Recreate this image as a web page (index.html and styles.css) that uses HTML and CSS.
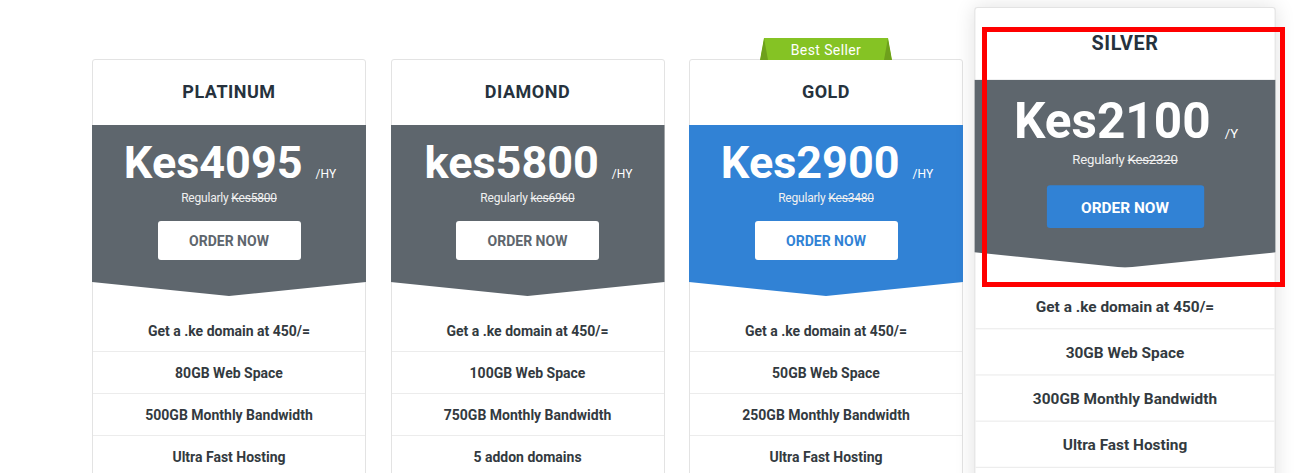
FILE: index.html
```html
<!DOCTYPE html>
<html>
<head>
<meta charset="utf-8">
<link rel="stylesheet" href="styles.css">
</head>
<body>
<div class="plans">
  <div class="card">
    <div class="title">PLATINUM</div>
    <div class="band">
      <div class="price"><span class="amount">Kes4095</span><span class="per">/HY</span></div>
      <div class="regular">Regularly <s>Kes5800</s></div>
      <a class="btn">ORDER NOW</a>
    </div>
    <ul class="features">
      <li>Get a .ke domain at 450/=</li>
      <li>80GB Web Space</li>
      <li>500GB Monthly Bandwidth</li>
      <li>Ultra Fast Hosting</li>
      <li>Free SSL Certificate</li>
    </ul>
  </div>
  <div class="card">
    <div class="title">DIAMOND</div>
    <div class="band">
      <div class="price"><span class="amount">kes5800</span><span class="per">/HY</span></div>
      <div class="regular">Regularly <s>kes6960</s></div>
      <a class="btn">ORDER NOW</a>
    </div>
    <ul class="features">
      <li>Get a .ke domain at 450/=</li>
      <li>100GB Web Space</li>
      <li>750GB Monthly Bandwidth</li>
      <li>5 addon domains</li>
      <li>Ultra Fast Hosting</li>
    </ul>
  </div>
  <div class="card featured">
    <div class="ribbon">Best Seller</div>
    <div class="title">GOLD</div>
    <div class="band">
      <div class="price"><span class="amount">Kes2900</span><span class="per">/HY</span></div>
      <div class="regular">Regularly <s>Kes3480</s></div>
      <a class="btn">ORDER NOW</a>
    </div>
    <ul class="features">
      <li>Get a .ke domain at 450/=</li>
      <li>50GB Web Space</li>
      <li>250GB Monthly Bandwidth</li>
      <li>Ultra Fast Hosting</li>
      <li>Free SSL Certificate</li>
    </ul>
  </div>
  <div class="card hovered">
    <div class="title">SILVER</div>
    <div class="band">
      <div class="price"><span class="amount">Kes2100</span><span class="per">/Y</span></div>
      <div class="regular">Regularly <s>Kes2320</s></div>
      <a class="btn">ORDER NOW</a>
    </div>
    <ul class="features">
      <li>Get a .ke domain at 450/=</li>
      <li>30GB Web Space</li>
      <li>300GB Monthly Bandwidth</li>
      <li>Ultra Fast Hosting</li>
      <li>Free SSL Certificate</li>
    </ul>
  </div>
</div>
<div class="highlight"></div>
</body>
</html>
```
FILE: styles.css
```css
* { box-sizing: border-box; }
html, body { margin: 0; padding: 0; background: #fff; overflow: hidden; }
body {
  font-family: Roboto, "Liberation Sans", Arial, sans-serif;
  height: 473px;
  position: relative;
}
.plans {
  display: flex;
  gap: 24.5px;
  padding-left: 92px;
  padding-top: 59px;
  align-items: flex-start;
}
.card {
  width: 274px;
  flex: 0 0 274px;
  background: #fff;
  border: 1px solid #e3e3e3;
  border-radius: 3px;
  position: relative;
}
.title {
  height: 65px;
  display: flex;
  align-items: center;
  justify-content: center;
  font-weight: 700;
  font-size: 18px;
  letter-spacing: 0.5px;
  color: #26323d;
  padding-bottom: 2px;
}
.band {
  background: #5e666d;
  height: 171px;
  margin: 0 -1px;
  clip-path: polygon(0 0, 100% 0, 100% 157px, 50% 100%, 0 157px);
  display: flex;
  flex-direction: column;
  align-items: center;
  padding-top: 15px;
  color: #fff;
}
.featured .band { background: #3182d5; }
.price {
  display: flex;
  align-items: baseline;
  line-height: 46px;
  padding-left: 2px;
}
.amount {
  font-size: 45px;
  font-weight: 700;
}
.per {
  font-size: 12px;
  margin-left: 13px;
  font-weight: 400;
}
.regular {
  font-size: 12px;
  line-height: 16px;
  margin-top: -7px;
  color: #f0f0f0;
  letter-spacing: -0.2px;
}
.regular s { text-decoration-thickness: 1px; }
.btn {
  margin-top: 15px;
  width: 143px;
  height: 39px;
  background: #fff;
  border-radius: 3px;
  display: flex;
  align-items: center;
  justify-content: center;
  font-size: 14px;
  font-weight: 700;
  color: #5e666d;
}
.featured .btn { color: #3182d5; }
.features {
  list-style: none;
  margin: 0;
  padding: 14px 0 0;
}
.features li {
  height: 42px;
  border-bottom: 1px solid #ececec;
  display: flex;
  align-items: center;
  justify-content: center;
  font-size: 14px;
  font-weight: 700;
  color: #333a40;
}
.ribbon {
  position: absolute;
  bottom: 100%;
  left: 50%;
  margin-left: -66px;
  width: 132px;
  height: 22px;
  background: #85c324;
  clip-path: polygon(4px 0, 128px 0, 132px 100%, 0 100%);
  color: #fff;
  font-size: 14px;
  letter-spacing: 0.4px;
  display: flex;
  align-items: center;
  justify-content: center;
  padding-top: 1px;
}
.ribbon::before, .ribbon::after {
  content: "";
  position: absolute;
  bottom: 0;
  width: 12px;
  height: 22px;
  background: #6ea01c;
}
.ribbon::before { left: 0; clip-path: polygon(4px 0, 8px 100%, 0 100%); }
.ribbon::after { right: 0; clip-path: polygon(8px 0, 12px 100%, 4px 100%); }
.hovered {
  transform-origin: 50% 0;
  transform: translateY(-52px) scale(1.1);
  box-shadow: 0 0 18px rgba(0, 0, 0, 0.12);
  z-index: 2;
}
.hovered .btn { background: #3182d5; color: #fff; }
.highlight {
  position: absolute;
  left: 982px;
  top: 27px;
  width: 303px;
  height: 260px;
  border: 5px solid #ff0000;
  z-index: 5;
}
```
